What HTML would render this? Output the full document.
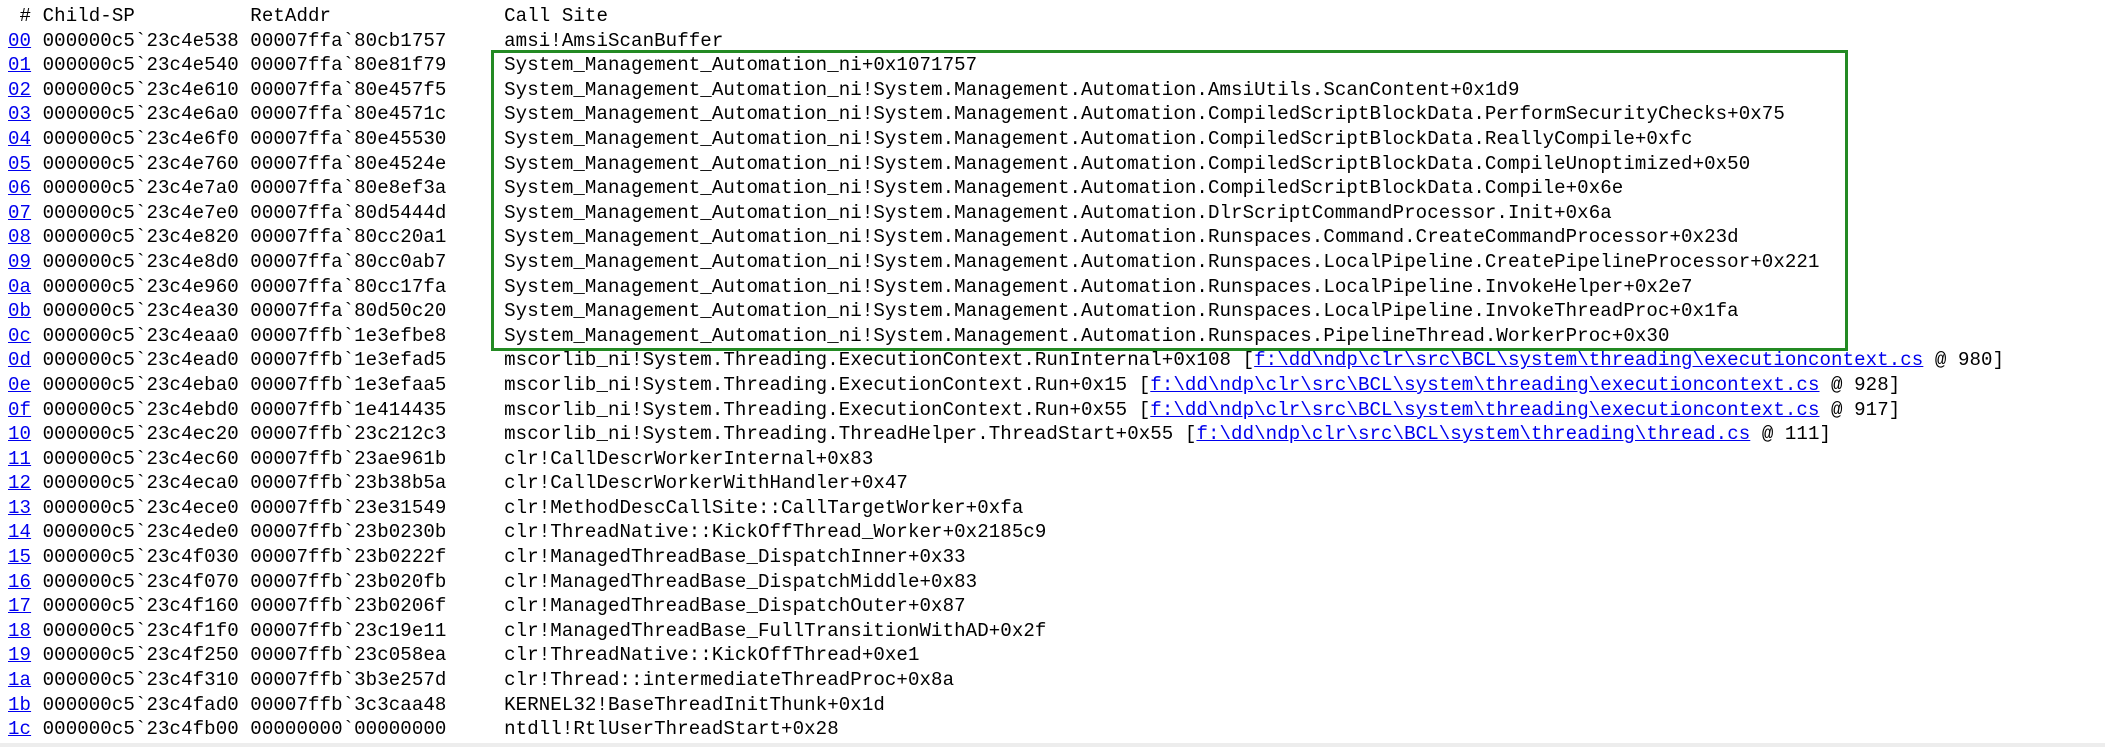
<!DOCTYPE html>
<html><head><meta charset="utf-8"><style>
html,body{margin:0;padding:0;background:#fff;width:2105px;height:747px;overflow:hidden;position:relative}
pre{position:absolute;left:8px;top:4px;margin:0;font-family:"Liberation Mono",monospace;font-size:19.1px;letter-spacing:0.08px;line-height:24.6px;color:#000}
a{color:#0000ee;text-decoration:underline}
.box{position:absolute;left:491px;top:50px;width:1351px;height:295px;border:3px solid #238a23}
.bar{position:absolute;left:0;top:743px;width:2105px;height:4px;background:#ededed}
</style></head><body>
<pre> # Child-SP          RetAddr               Call Site
<a>00</a> 000000c5`23c4e538 00007ffa`80cb1757     amsi!AmsiScanBuffer
<a>01</a> 000000c5`23c4e540 00007ffa`80e81f79     System_Management_Automation_ni+0x1071757
<a>02</a> 000000c5`23c4e610 00007ffa`80e457f5     System_Management_Automation_ni!System.Management.Automation.AmsiUtils.ScanContent+0x1d9
<a>03</a> 000000c5`23c4e6a0 00007ffa`80e4571c     System_Management_Automation_ni!System.Management.Automation.CompiledScriptBlockData.PerformSecurityChecks+0x75
<a>04</a> 000000c5`23c4e6f0 00007ffa`80e45530     System_Management_Automation_ni!System.Management.Automation.CompiledScriptBlockData.ReallyCompile+0xfc
<a>05</a> 000000c5`23c4e760 00007ffa`80e4524e     System_Management_Automation_ni!System.Management.Automation.CompiledScriptBlockData.CompileUnoptimized+0x50
<a>06</a> 000000c5`23c4e7a0 00007ffa`80e8ef3a     System_Management_Automation_ni!System.Management.Automation.CompiledScriptBlockData.Compile+0x6e
<a>07</a> 000000c5`23c4e7e0 00007ffa`80d5444d     System_Management_Automation_ni!System.Management.Automation.DlrScriptCommandProcessor.Init+0x6a
<a>08</a> 000000c5`23c4e820 00007ffa`80cc20a1     System_Management_Automation_ni!System.Management.Automation.Runspaces.Command.CreateCommandProcessor+0x23d
<a>09</a> 000000c5`23c4e8d0 00007ffa`80cc0ab7     System_Management_Automation_ni!System.Management.Automation.Runspaces.LocalPipeline.CreatePipelineProcessor+0x221
<a>0a</a> 000000c5`23c4e960 00007ffa`80cc17fa     System_Management_Automation_ni!System.Management.Automation.Runspaces.LocalPipeline.InvokeHelper+0x2e7
<a>0b</a> 000000c5`23c4ea30 00007ffa`80d50c20     System_Management_Automation_ni!System.Management.Automation.Runspaces.LocalPipeline.InvokeThreadProc+0x1fa
<a>0c</a> 000000c5`23c4eaa0 00007ffb`1e3efbe8     System_Management_Automation_ni!System.Management.Automation.Runspaces.PipelineThread.WorkerProc+0x30
<a>0d</a> 000000c5`23c4ead0 00007ffb`1e3efad5     mscorlib_ni!System.Threading.ExecutionContext.RunInternal+0x108 [<a>f:\dd\ndp\clr\src\BCL\system\threading\executioncontext.cs</a> @ 980]
<a>0e</a> 000000c5`23c4eba0 00007ffb`1e3efaa5     mscorlib_ni!System.Threading.ExecutionContext.Run+0x15 [<a>f:\dd\ndp\clr\src\BCL\system\threading\executioncontext.cs</a> @ 928]
<a>0f</a> 000000c5`23c4ebd0 00007ffb`1e414435     mscorlib_ni!System.Threading.ExecutionContext.Run+0x55 [<a>f:\dd\ndp\clr\src\BCL\system\threading\executioncontext.cs</a> @ 917]
<a>10</a> 000000c5`23c4ec20 00007ffb`23c212c3     mscorlib_ni!System.Threading.ThreadHelper.ThreadStart+0x55 [<a>f:\dd\ndp\clr\src\BCL\system\threading\thread.cs</a> @ 111]
<a>11</a> 000000c5`23c4ec60 00007ffb`23ae961b     clr!CallDescrWorkerInternal+0x83
<a>12</a> 000000c5`23c4eca0 00007ffb`23b38b5a     clr!CallDescrWorkerWithHandler+0x47
<a>13</a> 000000c5`23c4ece0 00007ffb`23e31549     clr!MethodDescCallSite::CallTargetWorker+0xfa
<a>14</a> 000000c5`23c4ede0 00007ffb`23b0230b     clr!ThreadNative::KickOffThread_Worker+0x2185c9
<a>15</a> 000000c5`23c4f030 00007ffb`23b0222f     clr!ManagedThreadBase_DispatchInner+0x33
<a>16</a> 000000c5`23c4f070 00007ffb`23b020fb     clr!ManagedThreadBase_DispatchMiddle+0x83
<a>17</a> 000000c5`23c4f160 00007ffb`23b0206f     clr!ManagedThreadBase_DispatchOuter+0x87
<a>18</a> 000000c5`23c4f1f0 00007ffb`23c19e11     clr!ManagedThreadBase_FullTransitionWithAD+0x2f
<a>19</a> 000000c5`23c4f250 00007ffb`23c058ea     clr!ThreadNative::KickOffThread+0xe1
<a>1a</a> 000000c5`23c4f310 00007ffb`3b3e257d     clr!Thread::intermediateThreadProc+0x8a
<a>1b</a> 000000c5`23c4fad0 00007ffb`3c3caa48     KERNEL32!BaseThreadInitThunk+0x1d
<a>1c</a> 000000c5`23c4fb00 00000000`00000000     ntdll!RtlUserThreadStart+0x28</pre>
<div class="box"></div>
<div class="bar"></div>
</body></html>
